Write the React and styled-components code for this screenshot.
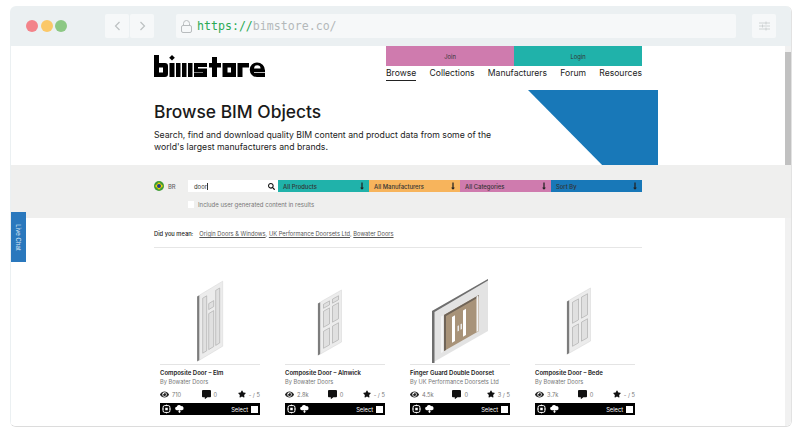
import React from "react";
import styled, { createGlobalStyle } from "styled-components";
import { FaEye, FaCommentAlt, FaStar, FaSearch, FaLongArrowAltDown } from "react-icons/fa";

const products = [
  { title: "Composite Door – Elm", by: "By Bowater Doors", views: "710", comments: "0", rating: "- / 5", art: "elm" },
  { title: "Composite Door – Alnwick", by: "By Bowater Doors", views: "2.8k", comments: "0", rating: "- / 5", art: "alnwick" },
  { title: "Finger Guard Double Doorset", by: "By UK Performance Doorsets Ltd", views: "4.5k", comments: "0", rating: "3 / 5", art: "double" },
  { title: "Composite Door – Bede", by: "By Bowater Doors", views: "3.7k", comments: "0", rating: "- / 5", art: "bede" },
];

const filters = [
  { label: "All Products", color: "#20b2aa" },
  { label: "All Manufacturers", color: "#f7b45c" },
  { label: "All Categories", color: "#cf7bae" },
  { label: "Sort By", color: "#1878b8" },
];

function Logo() {
  return (
    <svg width="111" height="22" viewBox="0 0 111 22" fill="#000">
      <path d="M0 0h5v8h6a3 3 0 0 1 3 3v8a3 3 0 0 1-3 3H0zM5 12.500v5h4v-5z" fillRule="evenodd" />
      <path d="M18 0l2.800 2.800L18 5.600l-2.800-2.800z" />
      <rect x="15.500" y="8" width="5" height="14" />
      <rect x="22" y="8" width="4.500" height="14" />
      <rect x="28" y="8" width="4.500" height="14" />
      <rect x="34" y="8" width="4.500" height="14" />
      <path d="M40 8h13v4h-9v1.500h9V22H40v-4h9v-.5h-9z" />
      <path d="M58 2h5v6h4v4.500h-4V22h-5V12.500h-3V8h3z" />
      <path d="M68.500 8H82v14H68.500zM73.500 12.500v5H77v-5z" fillRule="evenodd" />
      <path d="M83.500 8H95v4.500h-6.500V22h-5z" />
      <path d="M103 7.500a8 8 0 0 1 8 8V17h-11v.8h11V22h-8a7.250 7.250 0 0 1 0-14.500zM100 13.500h6.500a3.250 3.250 0 0 0-6.500 0z" fillRule="evenodd" />
    </svg>
  );
}

function Flag() {
  return (
    <svg width="10" height="10" viewBox="0 0 10 10">
      <circle cx="5" cy="5" r="5" fill="#3f9c35" />
      <path d="M5 1.300L9 5 5 8.700 1 5z" fill="#f2d500" />
      <circle cx="5" cy="5" r="2" fill="#1f3f8f" />
    </svg>
  );
}

function SingleDoor({ x, top, h, w, slope, panels }) {
  // door drawn upright, then sheared into the isometric view
  return (
    <g transform={`matrix(1 ${-slope} 0 1 ${x} ${top})`}>
      <rect x="-2.600" y="0" width="2.600" height={h} fill="#7c7c7c" />
      <rect x="0" y="0" width={w} height={h} fill="#ececec" stroke="#d8d8d8" strokeWidth="0.500" />
      {panels.map((p, i) => (
        <rect key={i} x={p[0]} y={p[1]} width={p[2]} height={p[3]} fill="#e0e0e0" stroke="#a4a4a4" strokeWidth="0.500" />
      ))}
    </g>
  );
}

function DoorArt({ art }) {
  return (
    <svg width="100" height="85" viewBox="0 0 100 85">
      {art === "elm" && (
        <SingleDoor x={39.700} top={17} h={65} w={23} slope={0.6} panels={[
          [3, 5, 4, 55], [9, 14, 5, 6], [9, 24, 5, 36], [16, 5, 4, 55],
        ]} />
      )}
      {art === "alnwick" && (
        <SingleDoor x={35.500} top={24} h={52} w={21} slope={0.57} panels={[
          [3, 4, 6, 4], [12, 4, 6, 4], [3, 11, 6, 16], [12, 11, 6, 16], [3, 31, 6, 17], [12, 31, 6, 17],
        ]} />
      )}
      {art === "bede" && (
        <SingleDoor x={34.500} top={22} h={53} w={21} slope={0.57} panels={[
          [3, 4, 6, 21], [12, 4, 6, 21], [3, 29, 6, 19], [12, 29, 6, 19],
        ]} />
      )}
      {art === "double" && (
        <g transform="translate(-10 -9)">
          <path d="M32 42L88 10V62L32 94z" fill="#e3e3e3" />
          <path d="M32 42L88 10V11.500L34.500 43V94H32z" fill="#6e6e6e" />
          <path d="M44 46L79 26V62L44 82z" fill="#a89379" />
          <path d="M44 46L79 26V28L46 47V81L44 82z" fill="#6f6458" />
          <path d="M52 48l3-1.700V72l-3 1.700zM63 41.500l3-1.700V66l-3 1.700z" fill="#fff" />
          <path d="M57.500 57l1.500-.8v5.500l-1.500.8zM60.500 55.300l1.500-.8V60l-1.500.8z" fill="#e8e8e8" />
          <path d="M41 47.500l2-1.100V83l-2 1.100zM76.500 27.500l2-1.100V62l-2 1.100z" fill="#f3f3f3" />
        </g>
      )}
    </svg>
  );
}

function BimIcon() {
  return (
    <svg width="9" height="10" viewBox="0 0 10 10" fill="none" stroke="#fff">
      <rect x="1.200" y="1.200" width="7.600" height="7.600" rx="1.800" strokeWidth="1.100" />
      <rect x="3.600" y="3.600" width="2.800" height="2.800" fill="#fff" stroke="none" />
      <path d="M5 0v1.500M5 8.500V10M0 5h1.500M8.500 5H10" strokeWidth="0.800" />
    </svg>
  );
}

function CloudDownIcon() {
  return (
    <svg width="9" height="10" viewBox="0 0 11 10" fill="#fff">
      <path d="M2.500 6.500a2.200 2.200 0 0 1-.3-4.400A2.800 2.800 0 0 1 7.400 1.500 2.500 2.500 0 0 1 8.500 6.500z" />
      <path d="M4.700 6.500h1.600v1.500h1.200L5.500 10 3.500 8h1.200z" />
    </svg>
  );
}

export default function App() {
  return (
    <>
      <GlobalStyle />
      <Window>
        <Chrome>
          <Dots>
            <Dot $color="#f3838a" />
            <Dot $color="#fbc868" />
            <Dot $color="#8cc884" />
          </Dots>
          <NavButtons>
            <ChromeButton>
              <svg width="7" height="10" viewBox="0 0 7 10" fill="none" stroke="#bcc0c2" strokeWidth="1.200"><path d="M5.500 1L1.500 5l4 4" /></svg>
            </ChromeButton>
            <ChromeButton>
              <svg width="7" height="10" viewBox="0 0 7 10" fill="none" stroke="#bcc0c2" strokeWidth="1.200"><path d="M1.500 1l4 4-4 4" /></svg>
            </ChromeButton>
          </NavButtons>
          <UrlBar>
            <svg width="11" height="13" viewBox="0 0 11 13" fill="none" stroke="#b8bcbe" strokeWidth="1">
              <rect x="0.500" y="5.500" width="10" height="7" rx="1.500" />
              <path d="M2.500 5.500V3.500a3 3 0 0 1 6 0v2" />
            </svg>
            <UrlText><UrlScheme>https://</UrlScheme>bimstore.co/</UrlText>
          </UrlBar>
          <ChromeButton>
            <svg width="11" height="10" viewBox="0 0 11 10" fill="none" stroke="#c6cacb" strokeWidth="0.800"><path d="M0 2h11M0 5h11M0 8h11" /><path d="M7 .5v3M3.500 3.500v3M7 6.500v3" /></svg>
          </ChromeButton>
        </Chrome>
        <Viewport>
          <ScrollTrack>
            <ScrollThumb />
          </ScrollTrack>
          <Page>
            <Container>
              <Header>
                <Logo />
                <HeaderRight>
                  <AuthRow>
                    <AuthButton $color="#cf7bae">Join</AuthButton>
                    <AuthButton $color="#20b2aa">Login</AuthButton>
                  </AuthRow>
                  <MainNav>
                    <NavLink $active>Browse</NavLink>
                    <NavLink>Collections</NavLink>
                    <NavLink>Manufacturers</NavLink>
                    <NavLink>Forum</NavLink>
                    <NavLink>Resources</NavLink>
                  </MainNav>
                </HeaderRight>
              </Header>
            </Container>
            <Hero>
              <HeroText>
                <HeroTitle>Browse BIM Objects</HeroTitle>
                <HeroLead>
                  Search, find and download quality BIM content and product data from some of the world's largest manufacturers and brands.
                </HeroLead>
              </HeroText>
              <HeroShape />
            </Hero>
            <FilterBand>
              <FilterRow>
                <Region>
                  <Flag />
                  <RegionCode>BR</RegionCode>
                </Region>
                <SearchBox>
                  <SearchValue>door</SearchValue>
                  <FaSearch size={7} color="#111" />
                </SearchBox>
                {filters.map((f) => (
                  <FilterSelect key={f.label} $color={f.color}>
                    {f.label}
                    <FaLongArrowAltDown size={8} color="#222" />
                  </FilterSelect>
                ))}
              </FilterRow>
              <CheckRow>
                <CheckBox />
                <CheckLabel>Include user generated content in results</CheckLabel>
              </CheckRow>
            </FilterBand>
            <Container>
              <DidYouMean>
                <strong>Did you mean:</strong>
                <span>
                  <Suggestion>Origin Doors &amp; Windows</Suggestion>, <Suggestion>UK Performance Doorsets Ltd</Suggestion>, <Suggestion>Bowater Doors</Suggestion>
                </span>
              </DidYouMean>
              <Grid>
                {products.map((p) => (
                  <Card key={p.title}>
                    <CardArt><DoorArt art={p.art} /></CardArt>
                    <CardTitle>{p.title}</CardTitle>
                    <CardBy>{p.by}</CardBy>
                    <Stats>
                      <Stat><FaEye size={9} color="#222" />{p.views}</Stat>
                      <Stat><FaCommentAlt size={9} color="#111" />{p.comments}</Stat>
                      <Stat><FaStar size={8} color="#111" />{p.rating}</Stat>
                    </Stats>
                    <ActionBar>
                      <BarIcons>
                        <BimIcon />
                        <CloudDownIcon />
                      </BarIcons>
                      <SelectLabel>Select<SelectBox /></SelectLabel>
                    </ActionBar>
                  </Card>
                ))}
              </Grid>
            </Container>
          </Page>
          <LiveChat><span>Live Chat</span></LiveChat>
        </Viewport>
      </Window>
    </>
  );
}

const GlobalStyle = createGlobalStyle`
  html, body {
    margin: 0;
    height: 100%;
    background: #fff;
    overflow: hidden;
  }
  body {
    font-family: "Inter", "Noto Sans", sans-serif;
  }
`;

const Window = styled.div`
  margin: 6px 8px 0 10px;
  height: 421px;
  display: flex;
  flex-direction: column;
  overflow: hidden;
  border-radius: 6px;
  border-bottom: 1px solid #dcdcdc;
  border-right: 1px solid #e2e2e2;
  box-sizing: border-box;
`;

const Chrome = styled.div`
  flex: 0 0 40px;
  display: flex;
  align-items: center;
  padding: 0 15px 0 16px;
  background: #ebf0f2;
`;

const Dots = styled.div`
  display: flex;
  gap: 2.500px;
  width: 79px;
`;

const Dot = styled.span`
  width: 12px;
  height: 12px;
  border-radius: 50%;
  background: ${(p) => p.$color};
`;

const NavButtons = styled.div`
  display: flex;
  gap: 1px;
  margin-right: 22px;
`;

const ChromeButton = styled.div`
  width: 24px;
  height: 24px;
  display: flex;
  align-items: center;
  justify-content: center;
  background: #f6f8f9;
  border-radius: 2px;
`;

const UrlBar = styled.div`
  width: 560px;
  height: 24px;
  margin-right: 16px;
  padding-left: 5px;
  box-sizing: border-box;
  display: flex;
  align-items: center;
  gap: 5px;
  background: #f6f8f9;
  border-radius: 2px;
`;

const UrlText = styled.span`
  font-family: "DejaVu Sans Mono", monospace;
  font-size: 11.600px;
  color: #b4b8ba;
`;

const UrlScheme = styled.span`
  color: #2aa952;
`;

const Viewport = styled.div`
  flex: 1;
  position: relative;
  min-height: 0;
  overflow: hidden;
  background: #fff;
  border-left: 1px solid #ebf0f2;
`;

const ScrollTrack = styled.div`
  position: absolute;
  right: 0;
  top: 0;
  bottom: 0;
  width: 6px;
  padding-top: 6px;
  box-sizing: border-box;
  background: #f1f1f1;
`;

const ScrollThumb = styled.div`
  height: 114px;
  background: #c1c1c1;
`;

const Page = styled.div`
  position: relative;
  display: flex;
  flex-direction: column;
`;

const Container = styled.div`
  width: 488px;
  margin-left: 143px;
`;

const Header = styled.header`
  display: flex;
  justify-content: space-between;
  height: 44px;

  > svg {
    margin-top: 9px;
  }
`;

const HeaderRight = styled.div`
  width: 256px;
  display: flex;
  flex-direction: column;
`;

const AuthRow = styled.div`
  display: flex;
  height: 20px;
`;

const AuthButton = styled.div`
  flex: 1;
  display: flex;
  align-items: center;
  justify-content: center;
  background: ${(p) => p.$color};
  font-size: 5.800px;
  color: #333;
`;

const MainNav = styled.nav`
  display: flex;
  justify-content: space-between;
  margin-top: 1px;
`;

const NavLink = styled.a`
  font-size: 8.600px;
  line-height: 12px;
  padding-bottom: 1px;
  color: #222;
  border-bottom: 1px solid ${(p) => (p.$active ? "#222" : "transparent")};
`;

const Hero = styled.section`
  height: 75px;
  display: flex;
  justify-content: space-between;
  padding: 0 133px 0 143px;
`;

const HeroText = styled.div`
  width: 345px;
  padding-top: 11px;
`;

const HeroTitle = styled.h1`
  margin: 0 0 6px;
  font-size: 17.400px;
  line-height: 22px;
  font-weight: 500;
  color: #1a1a1a;
`;

const HeroLead = styled.p`
  margin: 0;
  font-size: 8.700px;
  line-height: 12px;
  color: #222;
`;

const HeroShape = styled.div`
  width: 130px;
  height: 75px;
  background: #1878b8;
  clip-path: polygon(0 0, 100% 0, 100% 100%, 57% 100%);
`;

const FilterBand = styled.section`
  height: 53px;
  background: #efefee;
  box-sizing: border-box;
  padding: 15px 0 0 143px;
`;

const FilterRow = styled.div`
  width: 488px;
  height: 12px;
  display: flex;
  align-items: center;
`;

const Region = styled.div`
  width: 34px;
  display: flex;
  align-items: center;
  gap: 4px;
`;

const RegionCode = styled.span`
  font-size: 5.900px;
  color: #555;
`;

const SearchBox = styled.div`
  width: 90px;
  height: 12px;
  padding: 0 3px 0 6px;
  box-sizing: border-box;
  display: flex;
  align-items: center;
  justify-content: space-between;
  background: #fff;
`;

const SearchValue = styled.span`
  font-size: 5.900px;
  color: #333;
  border-right: 1px solid #333;
  padding-right: 0.500px;
`;

const FilterSelect = styled.div`
  flex: 1;
  height: 12px;
  padding: 0 3px 0 5px;
  box-sizing: border-box;
  display: flex;
  align-items: center;
  justify-content: space-between;
  background: ${(p) => p.$color};
  font-size: 5.900px;
  font-weight: 500;
  color: #333;
`;

const CheckRow = styled.div`
  margin: 9px 0 0 34px;
  display: flex;
  align-items: center;
  gap: 4px;
`;

const CheckBox = styled.span`
  width: 6px;
  height: 7px;
  background: #fff;
`;

const CheckLabel = styled.span`
  font-size: 6px;
  color: #777;
`;

const DidYouMean = styled.div`
  height: 18px;
  margin-top: 11px;
  display: flex;
  gap: 6px;
  font-size: 5.750px;
  line-height: 10px;
  color: #555;
  border-bottom: 1px solid #e6e6e6;

  strong {
    font-weight: 500;
    color: #222;
  }
`;

const Suggestion = styled.a`
  text-decoration: underline;
`;

const Grid = styled.div`
  display: grid;
  grid-template-columns: repeat(4, 100px);
  gap: 25px;
  padding: 30px 0 0 6px;
`;

const Card = styled.article`
  display: flex;
  flex-direction: column;
`;

const CardArt = styled.div`
  height: 87px;
  box-sizing: border-box;
  border-bottom: 1px solid #e4e4e4;
`;

const CardTitle = styled.div`
  margin-top: 3px;
  font-size: 6px;
  line-height: 9px;
  font-weight: 600;
  color: #222;
`;

const CardBy = styled.div`
  font-size: 5.700px;
  line-height: 9px;
  color: #777;
`;

const Stats = styled.div`
  margin-top: 2px;
  height: 12px;
  display: flex;
  justify-content: space-between;
  align-items: center;
`;

const Stat = styled.span`
  display: flex;
  align-items: center;
  gap: 3px;
  font-size: 5.700px;
  color: #777;
`;

const ActionBar = styled.div`
  margin-top: 3px;
  height: 12px;
  padding: 0 2px 0 2px;
  display: flex;
  align-items: center;
  justify-content: space-between;
  background: #000;
`;

const BarIcons = styled.div`
  display: flex;
  align-items: center;
  gap: 4px;
`;

const SelectLabel = styled.div`
  display: flex;
  align-items: center;
  gap: 3px;
  font-size: 5.700px;
  color: #fff;
`;

const SelectBox = styled.span`
  width: 7px;
  height: 7px;
  background: #fff;
`;

const LiveChat = styled.div`
  position: absolute;
  left: 0;
  top: 166px;
  width: 15px;
  height: 50px;
  display: flex;
  align-items: center;
  justify-content: center;
  background: #2a78bd;

  span {
    transform: rotate(90deg);
    white-space: nowrap;
    font-size: 6px;
    color: #dfeaf5;
  }
`;
